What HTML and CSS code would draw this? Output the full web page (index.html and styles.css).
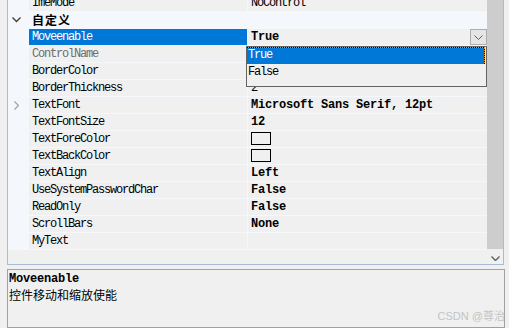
FILE: index.html
```html
<!DOCTYPE html>
<html lang="zh-CN">
<head>
  <meta charset="UTF-8" />
  <meta name="viewport" content="width=device-width, initial-scale=1.0"/>
  <title>PropertyGrid</title>
  <link rel="stylesheet" href="styles.css">
</head>
<body>
  <div class="window">
    <div class="grid">
      <div class="rows">
        <div class="row">
          <span class="gutter"></span>
          <span class="name">ImeMode</span>
          <span class="value">NoControl</span>
        </div>
        <div class="row category">
          <span class="gutter">
            <svg width="9" height="6" viewBox="0 0 9 6"><path d="M0.5 0.5 L4.5 4.5 L8.5 0.5" fill="none" stroke="#404040" stroke-width="1.4"/></svg>
          </span>
          <span class="cat-title">自定义</span>
        </div>
        <div class="row selected">
          <span class="gutter"></span>
          <span class="name">Moveenable</span>
          <span class="value bold">True
            <span class="drop-btn">
              <svg width="9" height="5" viewBox="0 0 9 5"><path d="M0.5 0.5 L4.5 4.5 L8.5 0.5" fill="none" stroke="#606060" stroke-width="1"/></svg>
            </span>
          </span>
        </div>
        <div class="row">
          <span class="gutter"></span>
          <span class="name readonly">ControlName</span>
          <span class="value"></span>
        </div>
        <div class="row">
          <span class="gutter"></span>
          <span class="name">BorderColor</span>
          <span class="value"></span>
        </div>
        <div class="row">
          <span class="gutter"></span>
          <span class="name">BorderThickness</span>
          <span class="value">2</span>
        </div>
        <div class="row">
          <span class="gutter">
            <svg width="5" height="9" viewBox="0 0 5 9"><path d="M0.5 0.5 L4.5 4.5 L0.5 8.5" fill="none" stroke="#a0a0a0" stroke-width="1.2"/></svg>
          </span>
          <span class="name">TextFont</span>
          <span class="value bold">Microsoft Sans Serif, 12pt</span>
        </div>
        <div class="row">
          <span class="gutter"></span>
          <span class="name">TextFontSize</span>
          <span class="value bold">12</span>
        </div>
        <div class="row">
          <span class="gutter"></span>
          <span class="name">TextForeColor</span>
          <span class="value"><span class="swatch"></span></span>
        </div>
        <div class="row">
          <span class="gutter"></span>
          <span class="name">TextBackColor</span>
          <span class="value"><span class="swatch"></span></span>
        </div>
        <div class="row">
          <span class="gutter"></span>
          <span class="name">TextAlign</span>
          <span class="value bold">Left</span>
        </div>
        <div class="row">
          <span class="gutter"></span>
          <span class="name">UseSystemPasswordChar</span>
          <span class="value bold">False</span>
        </div>
        <div class="row">
          <span class="gutter"></span>
          <span class="name">ReadOnly</span>
          <span class="value bold">False</span>
        </div>
        <div class="row">
          <span class="gutter"></span>
          <span class="name">ScrollBars</span>
          <span class="value bold">None</span>
        </div>
        <div class="row">
          <span class="gutter"></span>
          <span class="name">MyText</span>
          <span class="value"></span>
        </div>
      </div>

      <div class="scrollbar">
        <div class="thumb"></div>
        <div class="arrow">
          <svg width="9" height="5" viewBox="0 0 9 5"><path d="M0.5 0.5 L4.5 4.5 L8.5 0.5" fill="none" stroke="#606060" stroke-width="1.4"/></svg>
        </div>
      </div>

      <!-- open dropdown of Moveenable -->
      <div class="dropdown">
        <div class="option active">True</div>
        <div class="option">False</div>
      </div>
    </div>

    <div class="desc">
      <div class="desc-title">Moveenable</div>
      <div class="desc-text">控件移动和缩放使能</div>
    </div>

    <div class="watermark">CSDN @尊治</div>
  </div>
</body>
</html>
```

FILE: styles.css
```css
body {
  margin: 0;
  background-color: #f0f0f0;
}

.window {
  position: relative;
  width: 509px;
  height: 328px;
  overflow: hidden;
  background-color: #f0f0f0;
  padding-left: 7px;
  box-sizing: border-box;
  font-family: "Liberation Mono", "Noto Sans CJK SC", monospace;
  font-size: 12px;
  color: #000;
}

.grid {
  position: relative;
  display: flex;
  width: 497px;
  height: 265px;
  box-sizing: border-box;
  border-left: 1px solid #a9bcd6;
  border-right: 1px solid #a9bcd6;
  border-bottom: 1px solid #a9bcd6;
  overflow: hidden;
}

.rows {
  width: 479px;
  margin-top: -5px;
}

.row {
  display: flex;
  height: 17px;
  box-sizing: border-box;
  border-bottom: 1px solid #f4f7fc;
  line-height: 16px;
}

.gutter {
  display: flex;
  align-items: center;
  justify-content: center;
  width: 21px;
  flex: none;
  background-color: #f4f7fc;
  padding-right: 4px;
  box-sizing: border-box;
}

.name {
  width: 219px;
  flex: none;
  padding-left: 3px;
  box-sizing: border-box;
  border-right: 1px solid #f4f7fc;
  letter-spacing: -1.2px;
  white-space: nowrap;
  overflow: hidden;
}

.readonly {
  color: #6d6d6d;
}

.value {
  position: relative;
  flex: 1;
  padding-left: 3px;
  letter-spacing: -1.2px;
  white-space: nowrap;
}

.bold {
  font-weight: bold;
  letter-spacing: -0.2px;
}

.category {
  background-color: #f4f7fc;
}

.cat-title {
  padding-left: 3px;
  font-family: "Noto Sans CJK SC", sans-serif;
  font-weight: bold;
  font-size: 12px;
  letter-spacing: 1px;
}

.selected .name {
  background-color: #0078d7;
  color: #fff;
}

.drop-btn {
  position: absolute;
  right: 0;
  top: 0;
  width: 17px;
  height: 16px;
  box-sizing: border-box;
  border: 1px solid #adadad;
  background-color: #e5e5e5;
  display: flex;
  align-items: center;
  justify-content: center;
}

.swatch {
  display: inline-block;
  width: 20px;
  height: 13px;
  box-sizing: border-box;
  border: 1px solid #000;
  vertical-align: -3px;
}

.scrollbar {
  width: 16px;
  flex: none;
  display: flex;
  flex-direction: column;
  background-color: #f0f0f0;
}

.thumb {
  height: 249px;
  background-color: #cdcdcd;
}

.arrow {
  display: flex;
  justify-content: center;
  padding-top: 7px;
}

.dropdown {
  position: absolute;
  left: 238px;
  top: 46px;
  width: 241px;
  height: 41px;
  box-sizing: border-box;
  border: 1px solid #646464;
  background-color: #f0f0f0;
  letter-spacing: -1.2px;
}

.option {
  height: 17px;
  line-height: 17px;
  padding-left: 1px;
}

.option.active {
  background-color: #0078d7;
  color: #fff;
  margin-right: 1px;
  background-image:
    repeating-linear-gradient(90deg, #000 0 1px, #f7941d 1px 2px),
    repeating-linear-gradient(180deg, #000 0 1px, #f7941d 1px 2px);
  background-size: 100% 1px, 1px 100%;
  background-position: top left, top right;
  background-repeat: no-repeat;
}

.desc {
  margin-top: 4px;
  width: 498px;
  height: 59px;
  box-sizing: border-box;
  border: 1px solid #a0a0a0;
  padding: 2px 1px;
}

.desc-title {
  font-weight: bold;
  letter-spacing: -0.2px;
  line-height: 15px;
}

.desc-text {
  font-family: "Noto Sans CJK SC", sans-serif;
  font-size: 12px;
  line-height: 16px;
}

.watermark {
  position: absolute;
  right: 4px;
  bottom: 5px;
  font-family: "Liberation Sans", "Noto Sans CJK SC", sans-serif;
  font-size: 11px;
  color: #c4c4c4;
}
```
